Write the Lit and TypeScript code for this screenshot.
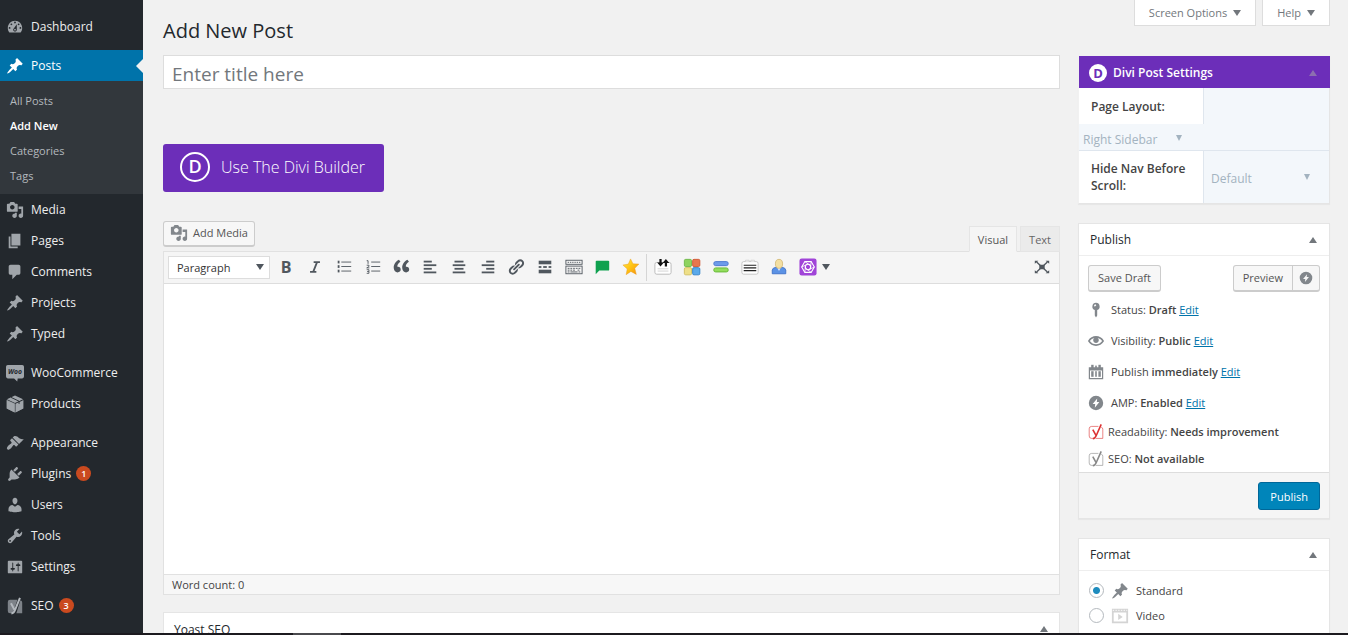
import { LitElement, html, css, svg, nothing, TemplateResult } from "lit";
import { customElement, property } from "lit/decorators.js";
import { classMap } from "lit/directives/class-map.js";

const PIN =
  "M10.44 3.02l1.82-1.82 6.36 6.35-1.83 1.82c-1.05-.68-2.48-.57-3.41.36l-.75.75c-.92.93-1.04 2.35-.35 3.41l-1.83 1.82-2.41-2.41-2.8 2.79c-.42.42-3.38 2.71-3.8 2.29s1.86-3.39 2.28-3.81l2.79-2.79L4.1 9.36l1.83-1.82c1.05.69 2.48.57 3.4-.36l.75-.75c.93-.92 1.05-2.35.36-3.41z";

const p = (d: string) => svg`<path fill="currentColor" d=${d} />`;
const bars = (list: number[][]) =>
  list.map(([x, y, w, h]) => svg`<rect fill="currentColor" x=${x} y=${y} width=${w} height=${h} />`);

const yoast = (body: string, mark: string) => svg`
  <path d="M4.5 3h8.2L7.6 18H4.5A2.500 2.500 0 0 1 2 15.500V5.500A2.500 2.500 0 0 1 4.500 3zM16 3.600q2 .6 2 2.600V18h-6.500z" fill=${body} />
  <path d="M5.500 7l3.800 7M15.500 1L10 14.500q-1.200 3.500-4 3.800" fill="none" stroke=${mark} stroke-width="2.200" />`;

const yoastOutline = (color: string) => svg`
  <path d="M13 3H4.500Q1.500 3 1.500 6v9q0 3 3 3H6M16.500 4q2 .5 2 2.500V18H9.500" fill="none" stroke=${color} stroke-width="1" opacity=".75" />
  <path d="M6 7l3.800 7M16.500 .5L10.500 14q-1.500 4-4.500 4.500" fill="none" stroke=${color} stroke-width="2" />`;

const ICONS: Record<string, unknown> = {
  dashboard: p(
    "M3.76 16h12.48c1.1-1.37 1.76-3.11 1.76-5 0-4.42-3.58-8-8-8s-8 3.58-8 8c0 1.89.66 3.63 1.76 5zM10 4c.55 0 1 .45 1 1s-.45 1-1 1-1-.45-1-1 .45-1 1-1zM6 6c.55 0 1 .45 1 1s-.45 1-1 1-1-.45-1-1 .45-1 1-1zm8 0c.55 0 1 .45 1 1s-.45 1-1 1-1-.45-1-1 .45-1 1-1zm-5.37 5.55L12 7v6c0 1.1-.9 2-2 2s-2-.9-2-2c0-.57.24-1.08.63-1.45zM4 10c.55 0 1 .45 1 1s-.45 1-1 1-1-.45-1-1 .45-1 1-1zm12 0c.55 0 1 .45 1 1s-.45 1-1 1-1-.45-1-1 .45-1 1-1zm-5 3c0-.55-.45-1-1-1s-1 .45-1 1 .45 1 1 1 1-.45 1-1z"
  ),
  pin: p(PIN),
  media: p(
    "M13 11V4c0-.55-.45-1-1-1h-1.67L9 1H5L3.67 3H2c-.55 0-1 .45-1 1v7c0 .55.45 1 1 1h10c.55 0 1-.45 1-1zM7 4.5c1.38 0 2.5 1.12 2.5 2.5S8.38 9.5 7 9.5 4.5 8.38 4.5 7 5.62 4.5 7 4.5zM14 6h5v10.5c0 1.38-1.12 2.5-2.5 2.5S14 17.88 14 16.5s1.12-2.5 2.5-2.5c.17 0 .34.02.5.05V9h-3V6zm-4 8.05V13h2v3.5c0 1.38-1.12 2.5-2.5 2.5S7 17.88 7 16.5 8.12 14 9.5 14c.17 0 .34.02.5.05z"
  ),
  page: p("M6 15V2h10v13H6zm-1 1h8v2H3V5h2v11z"),
  comment: p("M5 2h9c1.1 0 2 .9 2 2v7c0 1.1-.9 2-2 2h-2l-5 5v-5H5c-1.1 0-2-.9-2-2V4c0-1.1.9-2 2-2z"),
  woo: svg`<path fill="currentColor" d="M2 1h16q2 0 2 2v11q0 2-2 2h-5l-.5 3.500L9 16H2q-2 0-2-2V3q0-2 2-2z" />
    <text x="10" y="11" text-anchor="middle" font-size="7.500" font-weight="700" font-style="italic" fill="#23282d">Woo</text>`,
  box: svg`<path fill="currentColor" d="M10 .5l9 4.200L10 9 1 4.700z M.8 5.700L9.500 9.800v9.700L.8 15zM19.200 5.700L10.500 9.800v9.700L19.200 15z" />
    <path d="M5.500 2.600l9 4.300v3" fill="none" stroke="#23282d" stroke-width="1" />
    <path d="M.8 5.200v9.800l9.200 4.500V9.500zM19.200 5.200v9.800L10 19.500" fill="currentColor" opacity=".7" />`,
  appearance: p(
    "M14.48 11.06L7.41 3.99l1.5-1.5c.5-.56 2.3-.47 3.51.32 1.21.8 1.43 1.28 2.91 2.1 1.18.64 2.45 1.26 4.45.85zm-.71.71L6.7 4.7 4.93 6.47c-.39.39-.39 1.02 0 1.41l1.06 1.06c.39.39.39 1.03 0 1.42-.6.6-1.43 1.11-2.21 1.69-.35.26-.7.53-1.01.84C1.43 14.23.4 16.08 1.4 17.07c.99 1 2.84-.03 4.18-1.36.31-.31.58-.66.85-1.02.57-.78 1.08-1.61 1.69-2.21.39-.39 1.02-.39 1.41 0l1.06 1.06c.39.39 1.02.39 1.41 0z"
  ),
  plugins: p(
    "M13.11 4.36L9.87 7.6 8 5.73l3.24-3.24c.35-.34 1.05-.2 1.56.32.52.51.66 1.21.31 1.55zm-8 1.77l.91-1.12 9.01 9.01-1.19.84c-.71.71-2.63 1.16-3.82 1.16H6.14L4.9 17.26c-.59.59-1.54.59-2.12 0-.59-.58-.59-1.53 0-2.12l1.24-1.24v-3.88c0-1.13.4-3.19 1.09-3.89zm7.26 3.97l3.24-3.24c.34-.35 1.04-.21 1.55.31.52.51.66 1.21.31 1.55l-3.24 3.25z"
  ),
  users: p(
    "M10 9.25c-2.27 0-2.73-3.44-2.73-3.44C7 4.02 7.82 2 9.97 2c2.16 0 2.98 2.02 2.71 3.81 0 0-.41 3.44-2.68 3.44zm0 2.57L12.72 10c2.39 0 4.52 2.33 4.52 4.53v2.49s-3.65 1.13-7.24 1.13c-3.65 0-7.24-1.13-7.24-1.13v-2.49c0-2.25 1.94-4.48 4.47-4.48z"
  ),
  tools: p(
    "M16.68 9.77c-1.34 1.34-3.3 1.67-4.95.99l-5.41 6.52c-.99.99-2.59.99-3.58 0s-.99-2.59 0-3.57l6.52-5.42c-.68-1.65-.35-3.61.99-4.95 1.28-1.28 3.12-1.62 4.72-1.06l-2.89 2.89 2.82 2.82 2.86-2.87c.53 1.58.18 3.39-1.08 4.65zM3.81 16.21c.4.39 1.04.39 1.43 0 .4-.4.4-1.04 0-1.43-.39-.4-1.03-.4-1.43 0-.39.39-.39 1.03 0 1.43z"
  ),
  settings: p(
    "M18 16V4c0-.55-.45-1-1-1H3c-.55 0-1 .45-1 1v12c0 .55.45 1 1 1h14c.55 0 1-.45 1-1zM8 11h1c.55 0 1 .45 1 1s-.45 1-1 1H8v1.5c0 .28-.22.5-.5.5s-.5-.22-.5-.5V13H6c-.55 0-1-.45-1-1s.45-1 1-1h1V5.5c0-.28.22-.5.5-.5s.5.22.5.5V11zm5-2h-1c-.55 0-1-.45-1-1s.45-1 1-1h1V5.5c0-.28.22-.5.5-.5s.5.22.5.5V7h1c.55 0 1 .45 1 1s-.45 1-1 1h-1v5.5c0 .28-.22.5-.5.5s-.5-.22-.5-.5V9z"
  ),
  yoast: yoast("#7d8288", "#b4b9be"),
  yoastRed: yoastOutline("#dc3232"),
  yoastGray: yoastOutline("#888888"),
  italic: svg`<path d="M8.500 4.500h7M4.500 15.500h7M12.300 4.500L8 15.500" fill="none" stroke="currentColor" stroke-width="2" />`,
  ul: bars([[7, 4, 11, 1], [7, 9, 11, 1], [7, 14, 11, 1], [3, 3, 2, 3], [3, 8, 2, 3], [3, 13, 2, 3]]),
  ol: svg`${bars([[8, 4, 10, 1], [8, 9, 10, 1], [8, 14, 10, 1]])}
    <path d="M3 3h1.500v3.500M3 8h2.500v1.500L3 11h3M3 13h2.500v2M3.500 15h2v2H3" fill="none" stroke="currentColor" stroke-width="1" />`,
  quote: p(
    "M8.54 12.74c0-.87-.24-1.61-.72-2.22-.73-.92-2.14-1.03-2.96-.85-.34-1.93 1.3-4.39 3.42-5.45L6.65 1.94C3.45 3.46.31 6.96.85 11.37 1.19 14.16 2.8 16 5.08 16c1 0 1.83-.29 2.48-.88.66-.59.98-1.38.98-2.38zm9.43 0c0-.87-.24-1.61-.72-2.22-.73-.92-2.14-1.03-2.96-.85-.34-1.93 1.3-4.39 3.42-5.45l-1.63-2.28c-3.2 1.52-6.34 5.02-5.8 9.43.34 2.79 1.95 4.63 4.23 4.63 1 0 1.83-.29 2.48-.88.66-.59.98-1.38.98-2.38z"
  ),
  left: bars([[3, 3, 9, 2], [3, 7, 14, 2], [3, 11, 9, 2], [3, 15, 14, 2]]),
  center: bars([[5, 3, 10, 2], [3, 7, 14, 2], [5, 11, 10, 2], [3, 15, 14, 2]]),
  right: bars([[8, 3, 9, 2], [3, 7, 14, 2], [8, 11, 9, 2], [3, 15, 14, 2]]),
  link: p(
    "M17.74 2.76c1.68 1.69 1.68 4.41 0 6.1l-1.53 1.52c-1.12 1.12-2.7 1.47-4.14 1.09l2.62-2.61.76-.77.76-.76c.84-.84.84-2.2 0-3.04-.84-.85-2.2-.85-3.04 0l-.77.76-3.38 3.38c-.37-1.44-.02-3.02 1.1-4.14l1.52-1.53c1.69-1.68 4.42-1.68 6.1 0zM8.59 13.43l5.34-5.34c.42-.42.42-1.1 0-1.52-.44-.43-1.13-.39-1.53 0l-5.33 5.34c-.42.42-.42 1.1 0 1.52.44.43 1.13.39 1.52 0zm-.76 2.29l4.14-4.15c.38 1.44.03 3.02-1.09 4.14l-1.52 1.53c-1.69 1.68-4.41 1.68-6.1 0-1.68-1.68-1.68-4.42 0-6.1l1.53-1.52c1.12-1.12 2.7-1.47 4.14-1.1l-4.14 4.15c-.85.84-.85 2.2 0 3.05.84.84 2.2.84 3.04 0z"
  ),
  more: bars([[3, 3, 14, 4], [3, 9, 3, 2], [8, 9, 4, 2], [14, 9, 3, 2], [3, 13, 14, 4]]),
  keyboard: svg`<g fill="none" stroke="currentColor" stroke-width="1">
      <rect x="1" y="2.500" width="18" height="4.500" /><rect x="1" y="9" width="18" height="8.500" />
      <path d="M3 4.800h14" stroke-dasharray="1.500 1" /><path d="M3 11.500h14" stroke-dasharray="2 1" /><path d="M3 13.500h9M14 13.500h3" stroke-dasharray="2 1" />
      <path d="M3 15.500h2M6 15.500h8M15 15.500h2" /></g>`,
  bubble: svg`<path fill="#0fa14f" d="M4 3h13q1 0 1 1v9q0 1-1 1H7l-4 4V4q0-1 1-1z" />`,
  star: svg`<defs><linearGradient id="g" x1="0" y1="0" x2="1" y2="1"><stop offset="0" stop-color="#ffe94a" /><stop offset=".5" stop-color="#ffc312" /><stop offset="1" stop-color="#f58b0c" /></linearGradient></defs>
    <path fill="url(#g)" stroke="#e99a1c" stroke-width=".5" d="M9.500 1l2.700 5.500 6.600.3-4.600 4.700 1.700 6.700-6-3.300-5.300 3.600 1.200-6.400L1 7.800l6-1z" />`,
  sort: svg`<rect x="1" y="5" width="18" height="13" rx="2" fill="#fff" stroke="#b5b5b5" />
    <path d="M4 12h12M4 14.500h12" stroke="#cfcfcf" />
    <path d="M6 1h2.500v4H11L7.200 9.500 3.500 5H6zM12 9.500V5.500H9.500L13.200 1 17 5.500h-2.500v4z" fill="#111" />`,
  tiles: svg`<rect x="1.500" y="1.500" width="8" height="8" rx="1.500" fill="#8ed35f" stroke="#6db848" /><rect x="10.700" y="1.500" width="8" height="8" rx="1.500" fill="#e8764f" stroke="#cf5733" />
    <rect x="1.500" y="10.700" width="8" height="8" rx="1.500" fill="#eedf88" stroke="#d0bd5c" /><rect x="10.700" y="10.700" width="8" height="8" rx="1.500" fill="#5aa9ea" stroke="#2f80c6" />`,
  stripes: svg`<rect x="2" y="4" width="16" height="4.500" rx="2" fill="#6d9bea" stroke="#4a76cf" /><rect x="2" y="11" width="16" height="4.500" rx="2" fill="#93dd5d" stroke="#62b632" />`,
  note: svg`<rect x="1" y="4" width="18" height="14" rx="2" fill="#fff" stroke="#c2c2c2" /><path d="M5 4V2.500h4V4M11 4V2.500h4V4" fill="#fff" stroke="#cfcfcf" />
    <path d="M3 8h14M3 11h14M3 14h14" stroke="#222" stroke-width="1.200" />`,
  person: svg`<path d="M2.500 17.500v-4q.5-3 4-3h7q3.500 0 4 3v4z" fill="#5b92e5" stroke="#3c71c9" /><path d="M8 10.500l2 4 2-4z" fill="#eef4ff" />
    <ellipse cx="10" cy="6.500" rx="4" ry="5" fill="#f3dfa2" stroke="#cdb16a" stroke-width=".8" />`,
  knot: svg`<rect x=".5" y=".5" width="19" height="19" rx="2.500" fill="#a044d8" />
    <g fill="none" stroke="#fff" stroke-width="1.200"><path d="M6.500 4h7l3.500 6-3.500 6h-7L3 10z" /><circle cx="10" cy="10" r="3" /><path d="M6.500 4l6.300 4.500M13.500 4l-.7 7.500M17 10l-6 3M13.500 16l-6-4.500M6.500 16l.7-7.500M3 10l6-3" stroke-width=".9" /></g>`,
  expand: svg`<path d="M4 4.500l12 11M16 4.500L4 15.500" stroke="currentColor" stroke-width="1.500" /><path d="M7 7.500h6v5H7zM2 3h4l-4 3.500zM18 3h-4l4 3.500zM2 17h4l-4-3.500zM18 17h-4l4-3.500z" fill="currentColor" />`,
  key: svg`<path fill="currentColor" fill-rule="evenodd" d="M10 1a4.700 4.700 0 0 1 1.500 9.100v6.900l-1.500 2.500L8.500 17v-6.900A4.700 4.700 0 0 1 10 1zM9.500 3A1.500 1.500 0 0 0 7.700 4.800q0 1 1 .8.800-.5 1.500-1.200.4-1-.7-1.400z" />`,
  eye: p(
    "M19.7 9.4C17.7 6 14 3.9 10 3.9S2.3 6 .3 9.4L0 10l.3.6c2 3.4 5.700 5.500 9.700 5.500s7.700-2.100 9.700-5.500l.3-.6-.3-.6zM10 14.100c-3.100 0-6-1.600-7.700-4.100C3.600 8 5.700 6.600 8 6.100c-.9.6-1.500 1.700-1.500 2.900 0 1.900 1.600 3.500 3.500 3.500s3.500-1.600 3.500-3.500c0-1.200-.6-2.300-1.500-2.900 2.300.5 4.400 1.900 5.700 3.900-1.700 2.500-4.600 4.100-7.700 4.100z"
  ),
  calendar: svg`<path d="M1 4h18v15H1zM2.500 8v9.500h15V8z" fill="currentColor" fill-rule="evenodd" />
    ${bars([[4, 9, 3, 7], [9, 9, 2, 7], [13, 9, 3, 7], [4, 1, 3, 4], [13, 1, 3, 4], [9, 2, 2, 3]])}`,
  bolt: svg`<path fill="currentColor" fill-rule="evenodd" d="M10 1a9 9 0 1 0 0 18 9 9 0 0 0 0-18zM11.500 4.500L11 8.700h3.200L8.500 15.800 9 11.300H5.800z" />`,
  video: svg`<path d="M1 2h18v16H1zM3 6v10h14V6zM8 7.500l5 3.500-5 3.500z" fill="#d4d4d4" fill-rule="evenodd" /><path d="M2 3.700h16" stroke="#fff" stroke-dasharray="1.500 1.500" />`,
  image: svg`<path d="M2 8l9-5 7-1v16H2z" fill="#d4d4d4" />`,
};

@customElement("wp-icon")
class WpIcon extends LitElement {
  static styles = css`
    :host { display: block; flex: none; width: 18px; height: 18px; }
    .glyph { display: block; width: 100%; height: 100%; overflow: visible; }
  `;
  @property() name = "";
  render() {
    return html`<svg class="glyph" viewBox="0 0 20 20" aria-hidden="true">${ICONS[this.name]}</svg>`;
  }
}

const shared = css`
  * { box-sizing: border-box; }
  a { color: inherit; text-decoration: none; }
  button, input, select, textarea { font: inherit; color: inherit; margin: 0; }
  button { cursor: pointer; }
  .caret { width: 0; height: 0; flex: none; border: 4px solid transparent; border-bottom-width: 0; border-top: 6px solid currentColor; }
`;

interface Item { label: string; icon: string; badge?: number; sub?: string[] }
const MENU: Item[][] = [
  [{ label: "Dashboard", icon: "dashboard" }],
  [
    { label: "Posts", icon: "pin", sub: ["All Posts", "Add New", "Categories", "Tags"] },
    { label: "Media", icon: "media" },
    { label: "Pages", icon: "page" },
    { label: "Comments", icon: "comment" },
    { label: "Projects", icon: "pin" },
    { label: "Typed", icon: "pin" },
  ],
  [{ label: "WooCommerce", icon: "woo" }, { label: "Products", icon: "box" }],
  [
    { label: "Appearance", icon: "appearance" },
    { label: "Plugins", icon: "plugins", badge: 1 },
    { label: "Users", icon: "users" },
    { label: "Tools", icon: "tools" },
    { label: "Settings", icon: "settings" },
  ],
  [{ label: "SEO", icon: "yoast", badge: 3 }],
];

@customElement("admin-menu")
class AdminMenu extends LitElement {
  static styles = [shared, css`
    :host { display: block; background: #23282d; color: #eee; font-size: 12px; overflow: hidden; }
    .menu { display: flex; flex-direction: column; gap: 8px; padding-top: 11px; }
    .group, .sub { list-style: none; margin: 0; padding: 0; }
    .item { display: flex; align-items: center; gap: 7px; height: 31px; padding-left: 6px; }
    .item wp-icon { color: #a0a5aa; }
    .current { background: #0073aa; color: #fff; }
    .current wp-icon { color: #fff; }
    .notch { margin-left: auto; border: 7px solid transparent; border-left: 0; border-right-color: #f1f1f1; }
    .badge { background: #ca4a1f; color: #fff; font-size: 9px; font-weight: 600; line-height: 15px; min-width: 15px; border-radius: 8px; text-align: center; margin-left: -2px; }
    .sub { background: #32373c; padding: 7px 0 6px; font-size: 11px; line-height: 25px; color: #b4b9be; }
    .sub a { display: block; padding-left: 10px; }
    .sub .on { color: #fff; font-weight: 600; }
  `];
  private item(i: Item) {
    return html`<li>
      <a href="#" class=${classMap({ item: true, current: !!i.sub })}>
        <wp-icon name=${i.icon}></wp-icon><span>${i.label}</span>
        ${i.badge ? html`<span class="badge">${i.badge}</span>` : nothing}
        ${i.sub ? html`<span class="notch"></span>` : nothing}
      </a>
      ${i.sub
        ? html`<ul class="sub">${i.sub.map((s) => html`<li><a href="#" class=${classMap({ on: s === "Add New" })}>${s}</a></li>`)}</ul>`
        : nothing}
    </li>`;
  }
  render() {
    return html`<nav class="menu" aria-label="Main menu">
      ${MENU.map((g) => html`<ul class="group">${g.map((i) => this.item(i))}</ul>`)}
    </nav>`;
  }
}

@customElement("post-editor")
class PostEditor extends LitElement {
  static styles = [shared, css`
    :host { display: block; font-size: 11px; color: #444; }
    .title { display: block; width: 100%; height: 34px; padding: 4px 8px 0; border: 1px solid #ddd; background: #fff; font-size: 19px; outline: 0; }
    .title::placeholder { color: #72777c; opacity: 1; }
    .builder { display: flex; align-items: center; gap: 11px; height: 48px; margin: 55px 0 29px; padding: 0 19px 2px 17px; border: 0; border-radius: 3px; background: #6c2eb9; color: #fff; font-size: 16px; font-weight: 300; }
    .ring { width: 30px; height: 30px; border: 2px solid #fff; border-radius: 50%; font-size: 18px; font-weight: 600; line-height: 25px; text-align: center; }
    .head { display: flex; justify-content: space-between; align-items: flex-start; height: 30px; }
    .media { display: flex; align-items: center; gap: 5px; height: 26px; padding: 0 6px 2px; border: 1px solid #ccc; border-bottom-width: 2px; border-radius: 3px; background: #f7f7f7; color: #555; }
    .media wp-icon { color: #82878c; }
    .tabs { display: flex; gap: 3px; align-self: flex-end; margin-bottom: -1px; }
    .tab { height: 26px; padding: 0 8px; border: 1px solid #e5e5e5; background: #ebebeb; color: #666; }
    .tab.on { background: #f5f5f5; border-bottom-color: #f5f5f5; color: #555; }
    .frame { border: 1px solid #e1e1e1; }
    .bar { display: flex; align-items: center; height: 32px; padding: 0 3px 1px 4px; background: #f5f5f5; border-bottom: 1px solid #ddd; color: #50575e; }
    .pick { display: grid; align-items: center; margin-right: 2px; }
    .pick > * { grid-area: 1 / 1; }
    .pick select { appearance: none; width: 102px; height: 23px; padding: 0 8px; border: 1px solid #ddd; border-radius: 0; background: #fff; color: #333; }
    .pick .caret { justify-self: end; margin-right: 6px; pointer-events: none; }
    .group { display: flex; gap: 1px; }
    .rule { width: 1px; align-self: stretch; margin: 2px 2px 1px 1px; background: #d5d5d5; }
    .tool { display: grid; place-items: center; width: 28px; height: 28px; padding: 0; border: 0; background: none; }
    .tool b { font-size: 16px; line-height: 20px; }
    .bar wp-icon { width: 18px; height: 18px; }
    .tail { margin-left: auto; }
    .body { display: block; width: 100%; height: 290px; padding: 10px; border: 0; outline: 0; resize: none; background: #fff; }
    .status { height: 20px; padding-left: 8px; border-top: 1px solid #e1e1e1; background: #f7f7f7; line-height: 19px; }
    .box { margin-top: 17px; border: 1px solid #e5e5e5; background: #fff; height: 60px; }
    .box h2 { display: flex; justify-content: space-between; align-items: center; margin: 0; padding: 0 11px 0 10px; height: 32px; font-size: 12px; font-weight: 500; color: #23282d; }
    .up { border: 4px solid transparent; border-top-width: 0; border-bottom: 6px solid #72777c; }
  `];
  private tools(names: string[]) {
    return html`<div class="group">${names.map(
      (n) => html`<button class="tool" type="button" aria-label=${n}>${n === "bold" ? html`<b>B</b>` : html`<wp-icon name=${n}></wp-icon>`}</button>`
    )}</div>`;
  }
  render() {
    return html`
      <input class="title" type="text" aria-label="Title" placeholder="Enter title here" />
      <button class="builder" type="button"><span class="ring">D</span>Use The Divi Builder</button>
      <div class="head">
        <button class="media" type="button"><wp-icon name="media"></wp-icon>Add Media</button>
        <div class="tabs"><button class="tab on" type="button">Visual</button><button class="tab" type="button">Text</button></div>
      </div>
      <div class="frame">
        <div class="bar">
          <div class="pick"><select aria-label="Block format"><option>Paragraph</option></select><span class="caret"></span></div>
          ${this.tools(["bold", "italic", "ul", "ol", "quote"])}
          ${this.tools(["left", "center", "right"])}
          ${this.tools(["link", "more", "keyboard"])}
          ${this.tools(["bubble", "star"])}
          <span class="rule"></span>
          ${this.tools(["sort", "tiles", "stripes", "note", "person", "knot"])}
          <span class="caret"></span>
          <div class="tail">${this.tools(["expand"])}</div>
        </div>
        <textarea class="body" aria-label="Content"></textarea>
        <div class="status">Word count: 0</div>
      </div>
      <section class="box"><h2>Yoast SEO<span class="up"></span></h2></section>`;
  }
}

@customElement("post-settings")
class PostSettings extends LitElement {
  static styles = [shared, css`
    :host { display: flex; flex-direction: column; gap: 19px; padding-top: 1px; font-size: 11px; color: #444; }
    .box { border: 1px solid #e5e5e5; background: #fff; box-shadow: 0 1px 1px rgba(0, 0, 0, 0.04); }
    .box h2 { display: flex; align-items: center; justify-content: space-between; margin: 0; height: 32px; padding: 0 12px 0 11px; border-bottom: 1px solid #eee; font-size: 12px; font-weight: 500; color: #23282d; }
    .up { border: 4px solid transparent; border-top-width: 0; border-bottom: 6px solid #72777c; }
    .divi { border-top: 0; border-left-color: #f1f1f1; background: #f3f7fb; }
    .divi h2 { gap: 6px; margin-right: -1px; padding: 1px 13px 0 10px; border: 0; background: #6c2eb9; color: #fff; font-weight: 600; }
    .divi h2 .up { margin-left: auto; border-bottom-color: #8c6fb0; }
    .disc { width: 18px; height: 18px; border-radius: 50%; background: #fff; color: #6c2eb9; font-size: 13px; font-weight: 700; line-height: 18px; text-align: center; }
    .cell { display: flex; align-items: center; width: 125px; padding: 0 12px; border-right: 1px solid #dfe6ee; background: #fff; font-size: 12px; font-weight: 600; line-height: 17px; }
    .first { height: 36px; }
    .pick { display: grid; align-items: center; color: #a3b3c0; font-size: 12px; }
    .pick > * { grid-area: 1 / 1; }
    .pick select { appearance: none; height: 28px; padding: 2px 4px 0; border: 0; background: none; }
    .pick .caret { justify-self: end; pointer-events: none; border-width: 6px 3px 0; }
    .layout { width: 103px; height: 26px; }
    .hide { display: flex; height: 53px; border-top: 1px solid #dfe6ee; }
    .hide .pick { flex: 1; margin: 0 19px 0 3px; }
    .row { display: flex; align-items: center; }
    .actions { justify-content: space-between; padding: 9px 9px 2px; }
    .btn { height: 27px; padding: 0 9px 1px; border: 1px solid #ccc; border-bottom-width: 2px; border-radius: 3px; background: #f7f7f7; color: #555; }
    .join .btn:first-child { border-radius: 3px 0 0 3px; }
    .join .btn:last-child { border-radius: 0 3px 3px 0; margin-left: -1px; padding: 0 6px; color: #82878c; }
    .join wp-icon { width: 14px; height: 14px; }
    .meta { height: 31px; gap: 7px; padding-left: 9px; white-space: pre; }
    .meta wp-icon { width: 16px; height: 16px; color: #82878c; }
    .meta b { font-weight: 600; }
    .meta a { color: #0073aa; text-decoration: underline; }
    .yoast { height: 27px; gap: 4px; }
    .foot { display: flex; justify-content: flex-end; padding: 9px 9px 8px; border-top: 1px solid #ddd; background: #f5f5f5; }
    .primary { height: 28px; padding: 0 11px; border: 1px solid #006799; border-radius: 3px; background: #0085ba; color: #fff; }
    .formats { padding: 7px 10px; }
    .format { display: flex; align-items: center; height: 25px; gap: 7px; }
    .format wp-icon { color: #82878c; }
    .format input { appearance: none; width: 15px; height: 15px; border: 1px solid #b4b9be; border-radius: 50%; background: #fff; }
    .format input:checked { background: radial-gradient(circle, #1e8cbe 0 3px, #fff 4px); }
  `];
  private meta(icon: string, label: string, value: string, edit = true) {
    const link: TemplateResult | typeof nothing = edit ? html`<a href="#">Edit</a>` : nothing;
    return html`<div class=${classMap({ row: true, meta: true, yoast: !edit })}><wp-icon name=${icon}></wp-icon><span>${label} <b>${value}</b> ${link}</span></div>`;
  }
  render() {
    return html`
      <section class="box divi">
        <h2><span class="disc">D</span>Divi Post Settings<span class="up"></span></h2>
        <label class="cell first" for="layout">Page Layout:</label>
        <div class="pick layout"><select id="layout"><option>Right Sidebar</option></select><span class="caret"></span></div>
        <div class="hide">
          <label class="cell" for="nav">Hide Nav Before Scroll:</label>
          <div class="pick"><select id="nav"><option>Default</option></select><span class="caret"></span></div>
        </div>
      </section>
      <section class="box">
        <h2>Publish<span class="up"></span></h2>
        <div class="row actions">
          <button class="btn" type="button">Save Draft</button>
          <div class="row join"><button class="btn" type="button">Preview</button><button class="btn" type="button" aria-label="Preview AMP"><wp-icon name="bolt"></wp-icon></button></div>
        </div>
        ${this.meta("key", "Status:", "Draft")}
        ${this.meta("eye", "Visibility:", "Public")}
        ${this.meta("calendar", "Publish", "immediately")}
        ${this.meta("bolt", "AMP:", "Enabled")}
        ${this.meta("yoastRed", "Readability:", "Needs improvement", false)}
        ${this.meta("yoastGray", "SEO:", "Not available", false)}
        <div class="foot"><button class="primary" type="button">Publish</button></div>
      </section>
      <section class="box">
        <h2>Format<span class="up"></span></h2>
        <div class="formats">
          <label class="format"><input type="radio" name="format" checked /><wp-icon name="pin"></wp-icon>Standard</label>
          <label class="format"><input type="radio" name="format" /><wp-icon name="video"></wp-icon>Video</label>
          <label class="format"><input type="radio" name="format" aria-label="Image" /><wp-icon name="image"></wp-icon></label>
        </div>
      </section>`;
  }
}

@customElement("app-root")
class AppRoot extends LitElement {
  static styles = [shared, css`
    :host { display: grid; grid-template: minmax(0, 1fr) 2px / 143px minmax(0, 1fr); height: 100vh; overflow: hidden; background: #f1f1f1; font-family: "Open Sans", "Noto Sans", sans-serif; }
    .page { overflow: hidden; padding: 0 18px 0 20px; }
    .top { display: flex; justify-content: space-between; align-items: flex-start; height: 55px; }
    h1 { margin: 0; padding-top: 16px; font-size: 20px; line-height: 30px; font-weight: 400; color: #23282d; }
    .links { display: flex; gap: 6px; }
    .link { display: flex; align-items: center; gap: 6px; height: 26px; padding: 0 14px; border: 1px solid #ddd; border-top: 0; background: #fff; color: #72777c; font-size: 11px; }
    .cols { display: grid; grid-template-columns: minmax(0, 1fr) 252px; gap: 18px; }
    .edge { grid-column: 1 / -1; display: flex; background: #1c1a1f; }
    .thumb { width: 48px; margin-left: 293px; background: #4a4a4e; }
  `];
  render() {
    return html`
      <admin-menu></admin-menu>
      <main class="page">
        <header class="top">
          <h1>Add New Post</h1>
          <div class="links">
            <button class="link" type="button">Screen Options<span class="caret"></span></button>
            <button class="link" type="button">Help<span class="caret"></span></button>
          </div>
        </header>
        <div class="cols"><post-editor></post-editor><post-settings></post-settings></div>
      </main>
      <div class="edge"><span class="thumb"></span></div>`;
  }
}
